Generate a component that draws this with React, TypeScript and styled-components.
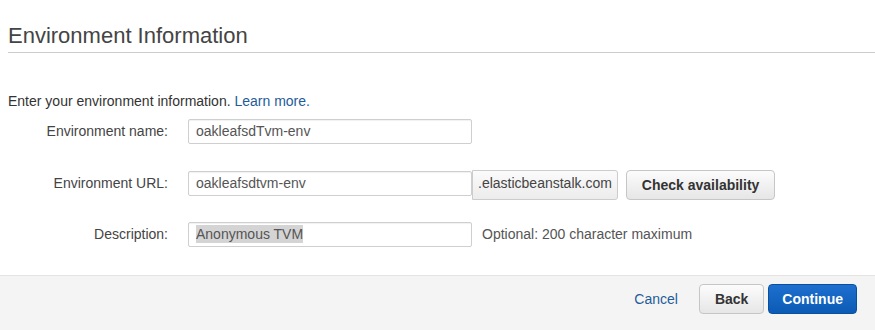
import styled, { createGlobalStyle } from 'styled-components';

const GlobalStyle = createGlobalStyle`
    html, body {
        margin: 0;
        padding: 0;
        background: #ffffff;
        font-family: "Liberation Sans", Arial, sans-serif;
        color: #333333;
    }
`

export default function App() {
    return (
        <>
            <GlobalStyle />
            <Page>
                <Header>
                    <Title>Environment Information</Title>
                </Header>
                <Intro>
                    Enter your environment information. <Link>Learn more.</Link>
                </Intro>
                <Form>
                    <Row>
                        <Label>Environment name:</Label>
                        <Field>
                            <Input defaultValue="oakleafsdTvm-env" />
                        </Field>
                    </Row>
                    <Row>
                        <Label>Environment URL:</Label>
                        <Field>
                            <Input defaultValue="oakleafsdtvm-env" />
                            <Suffix>.elasticbeanstalk.com</Suffix>
                            <Button>Check availability</Button>
                        </Field>
                    </Row>
                    <Row>
                        <Label>Description:</Label>
                        <Field>
                            <FakeInput>
                                <Selected>Anonymous TVM</Selected>
                            </FakeInput>
                            <Hint>Optional: 200 character maximum</Hint>
                        </Field>
                    </Row>
                </Form>
                <Footer>
                    <CancelLink>Cancel</CancelLink>
                    <Button>Back</Button>
                    <PrimaryButton>Continue</PrimaryButton>
                </Footer>
            </Page>
        </>
    );
}

const Page = styled.div`
    width: 875px;
    height: 330px;
    display: flex;
    flex-direction: column;
    overflow: hidden;
`

const Header = styled.div`
    margin-left: 8px;
    padding-top: 23px;
    padding-bottom: 4px;
    border-bottom: 1px solid #cccccc;
`

const Title = styled.h1`
    margin: 0;
    font-size: 22px;
    font-weight: normal;
    line-height: 25px;
    color: #444444;
`

const Intro = styled.p`
    margin: 40px 0 0 8px;
    font-size: 14px;
    line-height: 16px;
    color: #333333;
`

const Link = styled.a`
    color: #1f5c99;
    cursor: pointer;
`

const Form = styled.div`
    display: flex;
    flex-direction: column;
    gap: 26.5px;
    margin-top: 10px;
`

const Row = styled.div`
    display: grid;
    grid-template-columns: 168px 1fr;
    column-gap: 20px;
    height: 25px;
`

const Label = styled.label`
    text-align: right;
    font-size: 14px;
    line-height: 25px;
    color: #444444;
`

const Field = styled.div`
    display: flex;
    align-items: flex-start;
`

const Input = styled.input`
    box-sizing: border-box;
    width: 284px;
    height: 25px;
    margin: 0;
    padding: 0 7px 1px 7px;
    border: 1px solid #cfcfcf;
    border-radius: 2px;
    background: #ffffff;
    box-shadow: inset 0 1px 1px rgba(0, 0, 0, 0.06);
    font-family: "Liberation Sans", Arial, sans-serif;
    font-size: 14px;
    color: #555555;
    outline: none;
`

const FakeInput = styled.div`
    box-sizing: border-box;
    width: 284px;
    height: 25px;
    padding: 0 7px 1px 7px;
    border: 1px solid #cfcfcf;
    border-radius: 2px;
    box-shadow: inset 0 1px 1px rgba(0, 0, 0, 0.06);
    display: flex;
    align-items: center;
    font-size: 14px;
    color: #555555;
`

const Selected = styled.span`
    background: #d4d4d4;
    line-height: 18px;
`

const Suffix = styled.div`
    box-sizing: border-box;
    height: 30px;
    margin-top: -1px;
    padding: 0 5px 4px 5px;
    display: flex;
    align-items: center;
    border: 1px solid #cccccc;
    border-radius: 0 3px 3px 0;
    background: linear-gradient(#fbfbfb, #ececec);
    font-size: 14px;
    color: #444444;
`

const Button = styled.button`
    box-sizing: border-box;
    height: 30px;
    margin: -1px 0 0 8px;
    padding: 0 15px;
    border: 1px solid #c6c6c6;
    border-radius: 4px;
    background: linear-gradient(#fcfcfc, #e6e6e6);
    font-family: "Liberation Sans", Arial, sans-serif;
    font-size: 14px;
    font-weight: bold;
    color: #333333;
    cursor: pointer;
`

const Hint = styled.span`
    margin-left: 10px;
    font-size: 14px;
    line-height: 25px;
    color: #555555;
`

const Footer = styled.div`
    margin-top: auto;
    height: 55px;
    box-sizing: border-box;
    border-top: 1px solid #e3e3e3;
    background: #f4f4f4;
    display: flex;
    justify-content: flex-end;
    align-items: flex-start;
    padding: 8px 18px 0 0;

    ${Button} {
        margin: 0 0 0 4px;
        height: 30px;
        padding: 0 15px;
    }
`

const CancelLink = styled.a`
    font-size: 14px;
    line-height: 30px;
    color: #1f5c99;
    margin-right: 17px;
    cursor: pointer;
`

const PrimaryButton = styled.button`
    box-sizing: border-box;
    height: 30px;
    margin-left: 4px;
    padding: 0 13px;
    border: 1px solid #0a4fa0;
    border-radius: 4px;
    background: linear-gradient(#1e6fcf, #0b5bb5);
    font-family: "Liberation Sans", Arial, sans-serif;
    font-size: 14px;
    font-weight: bold;
    color: #ffffff;
    cursor: pointer;
`
